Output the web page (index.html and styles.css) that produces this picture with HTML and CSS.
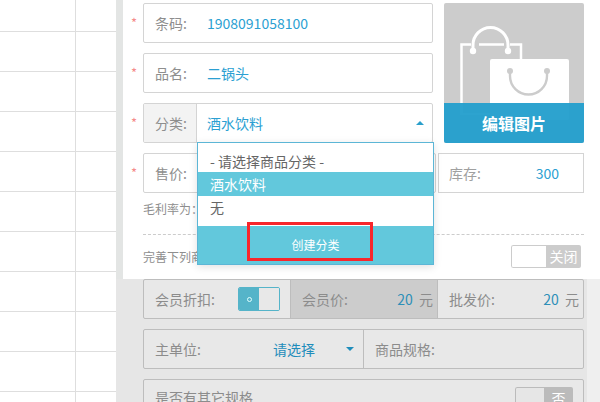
FILE: index.html
```html
<!DOCTYPE html>
<html>
<head>
    <meta charset="utf-8">
    <link rel="stylesheet" href="styles.css">
</head>
<body>
    <div class="app">
        <div class="sheet">
            <div class="sheet-row first"><div class="sheet-cell"></div></div>
            <div class="sheet-row"><div class="sheet-cell"></div></div>
            <div class="sheet-row"><div class="sheet-cell"></div></div>
            <div class="sheet-row"><div class="sheet-cell"></div></div>
            <div class="sheet-row"><div class="sheet-cell"></div></div>
            <div class="sheet-row"><div class="sheet-cell"></div></div>
            <div class="sheet-row"><div class="sheet-cell"></div></div>
            <div class="sheet-row"><div class="sheet-cell"></div></div>
            <div class="sheet-row"><div class="sheet-cell"></div></div>
            <div class="sheet-row"><div class="sheet-cell"></div></div>
            <div class="sheet-row last"><div class="sheet-cell"></div></div>
        </div>

        <div class="panel">
            <div class="top">
                <div class="head">
                    <div class="fields">
                        <div class="form-row">
                            <span class="star">*</span>
                            <div class="field">
                                <span class="label">条码:</span>
                                <span class="value">1908091058100</span>
                            </div>
                        </div>
                        <div class="form-row">
                            <span class="star">*</span>
                            <div class="field">
                                <span class="label">品名:</span>
                                <span class="value">二锅头</span>
                            </div>
                        </div>
                        <div class="form-row">
                            <span class="star">*</span>
                            <div class="field">
                                <span class="label label-fill">分类:</span>
                                <span class="value">酒水饮料</span>
                                <span class="caret-up"></span>
                            </div>
                        </div>
                    </div>
                    <div class="photo">
                        <svg class="bags" width="140" height="140" viewBox="0 0 140 140">
                            <path d="M27 41.500H17.500V111H77V41.500H66M35 41.500H60" fill="none" stroke="#fff" stroke-width="2.500"/>
                            <path d="M29 47V42A17.500 17.500 0 0 1 64 42V47" fill="none" stroke="#fff" stroke-width="3"/>
                            <circle cx="29" cy="48" r="3.200" fill="#fff"/>
                            <circle cx="64" cy="48" r="3.200" fill="#fff"/>
                            <rect x="46" y="56" width="79" height="61" rx="2" fill="#fff"/>
                            <path d="M66 68V73A18.500 18.500 0 0 0 103 73V68" fill="none" stroke="#ccc" stroke-width="2.400"/>
                            <circle cx="66" cy="68" r="3" fill="#ccc"/>
                            <circle cx="103" cy="68" r="3" fill="#ccc"/>
                        </svg>
                        <div class="photo-edit">编辑图片</div>
                    </div>
                </div>

                <div class="form-row price-row">
                    <span class="star">*</span>
                    <div class="field price">
                        <span class="label">售价:</span>
                    </div>
                    <div class="field stock">
                        <span class="label-stock">库存:</span>
                        <span class="value-stock">300</span>
                    </div>
                </div>

                <div class="note">毛利率为：</div>
                <div class="divider"></div>

                <div class="more-row">
                    <span class="more-text">完善下列商品信息</span>
                    <div class="switch">
                        <span class="switch-off"></span>
                        <span class="switch-text">关闭</span>
                    </div>
                </div>

                <div class="dropdown">
                    <div class="option">- 请选择商品分类 -</div>
                    <div class="option selected">酒水饮料</div>
                    <div class="option none">无</div>
                    <div class="create">
                        <span>创建分类</span>
                        <div class="highlight"></div>
                    </div>
                </div>
            </div>

            <div class="bottom">
                <div class="grid-row">
                    <div class="cell discount">
                        <span class="cell-label">会员折扣:</span>
                        <div class="switch-on">
                            <span class="switch-on-knob"><i class="ring"></i></span>
                            <span class="switch-on-rest"></span>
                        </div>
                    </div>
                    <div class="cell member">
                        <span class="cell-label">会员价:</span>
                        <span class="money"><b>20</b> 元</span>
                    </div>
                    <div class="cell wholesale">
                        <span class="cell-label">批发价:</span>
                        <span class="money"><b>20</b> 元</span>
                    </div>
                </div>
                <div class="grid-row">
                    <div class="cell unit">
                        <span class="cell-label">主单位:</span>
                        <span class="pick">请选择</span>
                        <span class="caret-down"></span>
                    </div>
                    <div class="cell spec">
                        <span class="cell-label">商品规格:</span>
                    </div>
                </div>
                <div class="grid-row">
                    <div class="cell other">
                        <span class="cell-label">是否有其它规格</span>
                        <div class="switch switch-dim">
                            <span class="switch-off"></span>
                            <span class="switch-text">否</span>
                        </div>
                    </div>
                </div>
            </div>
        </div>
    </div>
</body>
</html>
```

FILE: styles.css
```css
* {
    box-sizing: border-box;
}

html, body {
    margin: 0;
    height: 402px;
    overflow: hidden;
}

body {
    font-family: "Noto Sans CJK SC", "Noto Sans", sans-serif;
    font-size: 14px;
    color: #8e8e8e;
    background: #fff;
}

.app {
    display: flex;
    height: 402px;
}

/* table behind the dialog */
.sheet {
    width: 116px;
    flex-shrink: 0;
}

.sheet-row {
    height: 40px;
    border-bottom: 1px solid #dedede;
}

.sheet-row.first {
    height: 32px;
}

.sheet-row.last {
    border-bottom: none;
}

.sheet-cell {
    width: 76px;
    height: 100%;
    border-right: 1px solid #dedede;
}

.panel {
    flex: 1;
    background: #e3e5e4;
}

.top {
    position: relative;
    margin-left: 7px;
    height: 279px;
    padding: 3px 16px 0 0;
    background: #fff;
}

.head {
    display: flex;
}

.fields {
    display: flex;
    flex-direction: column;
    gap: 10px;
    width: 310px;
}

.form-row {
    display: flex;
    height: 40px;
}

.star {
    width: 20px;
    padding-left: 8px;
    line-height: 40px;
    font-size: 13px;
    color: #f58a8a;
}

.field {
    display: flex;
    align-items: center;
    flex: 1;
    position: relative;
    border: 1px solid #d4d4d4;
    border-radius: 2px;
    background: #fff;
}

.label {
    width: 53px;
    height: 100%;
    padding-left: 11px;
    line-height: 38px;
    flex-shrink: 0;
    border-radius: 2px 0 0 2px;
}

.label-fill {
    background: #f3f3f3;
    border-right: 1px solid #d4d4d4;
}

.value {
    margin-left: 10px;
    color: #2b9fd2;
}

.caret-up {
    margin-left: auto;
    margin-right: 8px;
    border-left: 4px solid transparent;
    border-right: 4px solid transparent;
    border-bottom: 4px solid #2a9fcb;
}

.photo {
    position: relative;
    width: 140px;
    height: 140px;
    margin-left: 11px;
    border-radius: 2px;
    background: #ccc;
    overflow: hidden;
}

.bags {
    display: block;
}

.photo-edit {
    position: absolute;
    left: 0;
    right: 0;
    bottom: 0;
    height: 40px;
    line-height: 40px;
    text-align: center;
    font-size: 16px;
    font-weight: 700;
    color: #fff;
    background: rgba(34, 158, 204, 0.95);
}

.price-row {
    margin-top: 10px;
}

.price {
    flex: none;
    width: 293px;
}

.stock {
    flex: none;
    width: 146px;
    margin-left: 2px;
    border-radius: 0;
}

.label-stock {
    margin-left: 10px;
    font-size: 14px;
    color: #a0a0a0;
}

.value-stock {
    margin-left: auto;
    margin-right: 24px;
    color: #2b9fd2;
}

.note {
    height: 32px;
    margin-left: 20px;
    line-height: 32px;
    font-size: 12px;
}

.divider {
    margin: 9px 0 10px 20px;
    border-top: 1px dashed #ccc;
}

.more-row {
    display: flex;
    align-items: center;
    height: 23px;
    margin-left: 20px;
    padding-right: 3px;
}

.more-text {
    font-size: 12px;
}

.switch {
    display: flex;
    width: 70px;
    height: 23px;
    margin-left: auto;
    border-radius: 2px;
    overflow: hidden;
}

.switch-off {
    flex: 1;
    border: 1px solid #ccc;
    border-right: none;
    border-radius: 2px 0 0 2px;
    background: #fff;
}

.switch-text {
    width: 35px;
    line-height: 23px;
    text-align: center;
    font-size: 14px;
    color: #fff;
    background: #ccc;
}

/* open category list */
.dropdown {
    position: absolute;
    left: 74px;
    top: 142px;
    width: 237px;
    height: 123px;
    display: flex;
    flex-direction: column;
    padding-top: 7px;
    border: 1px solid #5cb6d6;
    background: #fff;
    box-shadow: 0 2px 8px rgba(0, 0, 0, 0.12);
    color: #666;
}

.option {
    height: 23px;
    padding-left: 12px;
    line-height: 23px;
    font-size: 14px;
}

.option.selected {
    height: 24px;
    margin-top: -1px;
    line-height: 24px;
    color: #fff;
    background: #62c8dc;
}

.option.none {
    height: 30px;
    line-height: 22px;
}

.create {
    position: relative;
    flex: 1;
    padding-top: 9px;
    text-align: center;
    line-height: 20px;
    font-size: 12px;
    color: #fff;
    background: #62c8dc;
}

.highlight {
    position: absolute;
    left: 49px;
    top: -4px;
    width: 126px;
    height: 39px;
    border: 3px solid #f8262b;
}

/* part of the dialog under the list, greyed out */
.bottom {
    height: 123px;
    padding-left: 27px;
    padding-right: 3px;
    border-right: 13px solid #efefef;
    background: #e6e6e6;
    overflow: hidden;
}

.grid-row {
    display: flex;
    height: 40px;
    margin-bottom: 10px;
    border: 1px solid #bdbdbd;
    border-radius: 2px;
    background: #e8e8e8;
}

.cell {
    display: flex;
    align-items: center;
    padding: 0 0 0 11px;
    border-right: 1px solid #bdbdbd;
}

.cell:last-child {
    border-right: none;
}

.cell-label {
    color: #8c8c8c;
}

.discount {
    width: 147px;
}

.switch-on {
    display: flex;
    width: 42px;
    height: 24px;
    margin-left: auto;
    margin-right: 10px;
    border: 1px solid #55b4c9;
    border-radius: 2px;
    overflow: hidden;
}

.switch-on-knob {
    display: flex;
    align-items: center;
    justify-content: center;
    width: 20px;
    background: #55b4c9;
}

.ring {
    width: 5px;
    height: 5px;
    border: 1px solid #dff;
    border-radius: 50%;
}

.switch-on-rest {
    flex: 1;
    background: #e8e8e8;
}

.member {
    width: 147px;
    background: #ccc;
}

.wholesale {
    flex: 1;
}

.money {
    margin-left: auto;
    margin-right: 4px;
    color: #8c8c8c;
}

.money b {
    margin-right: 3px;
    font-weight: 400;
    color: #2d8fb8;
}

.unit {
    width: 220px;
}

.pick {
    margin-left: auto;
    color: #1f8dbb;
}

.caret-down {
    margin-left: 31px;
    margin-right: 9px;
    border-left: 4px solid transparent;
    border-right: 4px solid transparent;
    border-top: 4px solid #1f8dbb;
}

.spec {
    flex: 1;
}

.other {
    flex: 1;
    padding-right: 10px;
    align-items: flex-start;
    padding-top: 7px;
}

.switch-dim {
    width: 58px;
}

.switch-dim .switch-off {
    background: #e6e6e6;
    border-color: #bbb;
}

.switch-dim .switch-text {
    width: 29px;
    background: #bbb;
}
```
